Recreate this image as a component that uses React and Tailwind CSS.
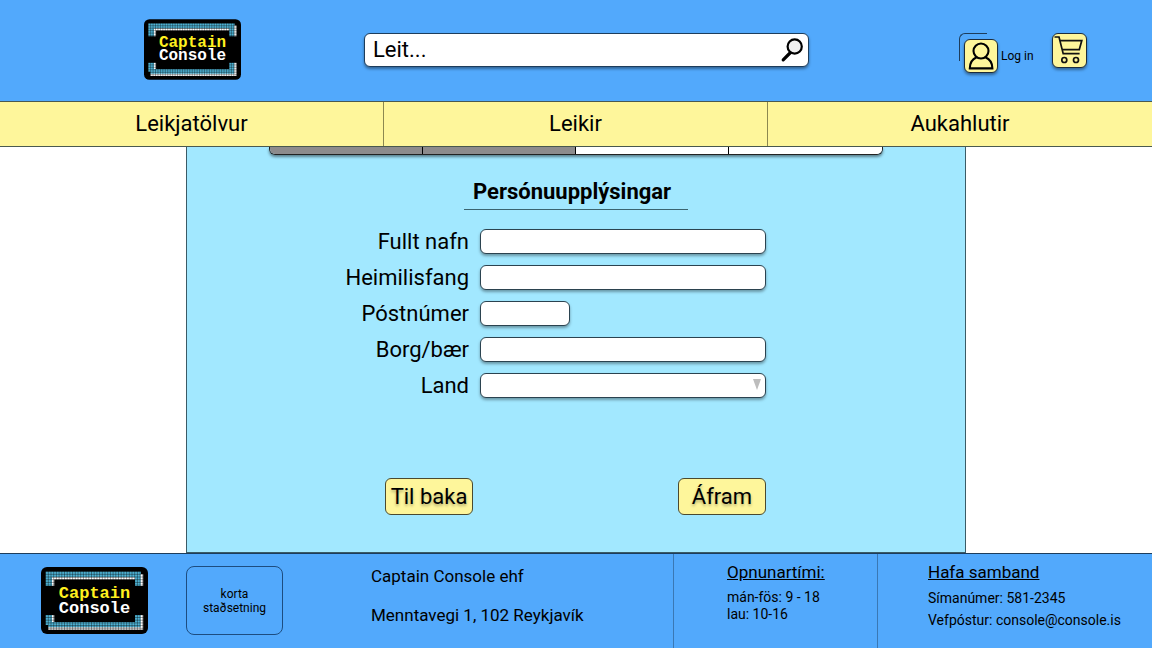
import React from "react";

const gridLines =
  Array.from({ length: 37 }, (_, i) => `M${(4.6 + i * 2.7).toFixed(1)} 4V64`).join("") +
  Array.from({ length: 23 }, (_, i) => `M4 ${(4.6 + i * 2.7).toFixed(1)}H103`).join("");

function LogoFrame() {
  return (
    <svg viewBox="0 0 107 67" className="absolute inset-0 h-full w-full" aria-hidden="true">
      <rect width="107" height="67" rx="6" fill="#000" />
      <path
        fill="#4fb4d6"
        d="M4.6 4.6H100V19H94V10.2H11V19H4.6ZM4.6 48H11V55H94V48H100V60.5H7V58H4.6Z"
      />
      <path
        fill="#fff"
        d="M11 10.2H94V12.5H13.3V19H11ZM99.6 7H102.2V19H99.6ZM11 48H13.3V55H11ZM99.6 48H102.2V62.8H7V60.2H99.6Z"
      />
      <path d={gridLines} stroke="#000" strokeWidth="0.7" strokeOpacity="0.55" />
    </svg>
  );
}

function Logo({ large }) {
  return (
    <a
      href="#"
      className={
        "relative flex shrink-0 flex-col items-center justify-center font-['Liberation_Mono',monospace] font-bold " +
        (large ? "h-[67px] w-[107px] text-[17px] leading-[15px]" : "h-[61px] w-[97px] text-[16px] leading-[13px]")
      }
    >
      <LogoFrame />
      <span className="relative text-[#fff01f]">Captain</span>
      <span className="relative text-white">Console</span>
    </a>
  );
}

function SearchIcon() {
  return (
    <svg width="26" height="26" viewBox="0 0 26 26" fill="none" aria-hidden="true">
      <path d="M10.5 15.5L3.2 22.8" stroke="#000" strokeWidth="3.2" strokeLinecap="round" />
      <circle cx="14.7" cy="9.5" r="7.1" fill="#f0f0f0" stroke="#000" strokeWidth="2.2" />
    </svg>
  );
}

function PersonIcon() {
  return (
    <svg width="32" height="32" viewBox="1 1 32 32" fill="none" stroke="#000" strokeWidth="2.1" aria-hidden="true">
      <circle cx="17" cy="12" r="7.5" />
      <path d="M12.6 18.2C8.4 20 5.8 24 5.8 29.4H28.4C28.4 24 25.6 20 21.4 18.2" />
    </svg>
  );
}

function CartIcon() {
  return (
    <svg width="33" height="33" viewBox="1 1 33 33" fill="none" stroke="#111" strokeWidth="1.7" aria-hidden="true">
      <path d="M2.5 4H7L11.2 20.6H27.6" />
      <path d="M7.9 7.6H29.8L27.3 16.6H10.2" />
      <circle cx="12.3" cy="27" r="2.5" />
      <circle cx="24" cy="27" r="2.5" />
    </svg>
  );
}

const tile =
  "flex items-center justify-center rounded-md border border-[#1c2c3c] bg-[#fef69b] shadow-[0_2px_3px_rgba(0,0,0,0.4)]";

function Header() {
  return (
    <header className="grid grid-cols-[364fr_445fr_343fr] bg-[#52a9fc] pt-[19px] pb-[21px]">
      <div className="pl-36">
        <Logo />
      </div>
      <form
        role="search"
        className="mt-3.5 flex h-[34px] items-center rounded-md border border-[#1d3d5c] bg-white pr-0.5 pl-2 shadow-[0_2px_3px_rgba(0,0,0,0.4)]"
      >
        <input
          type="search"
          aria-label="Leit"
          placeholder="Leit..."
          className="min-w-0 flex-1 bg-transparent text-[22px] leading-[30px] outline-none placeholder:text-black"
        />
        <button type="button" aria-label="Leita">
          <SearchIcon />
        </button>
      </form>
      <div className="mt-3.5 flex items-start pl-[150px]">
        <a href="#" className="relative flex items-center pt-1.5 pl-[5px]">
          <span className="absolute top-0 left-0 h-7 w-7 rounded-tl-md border-t border-l border-[#1d3d5c]" />
          <span className={tile + " h-[34px] w-[34px]"}>
            <PersonIcon />
          </span>
          <span className="pl-[3px] text-[12px] leading-4 whitespace-nowrap">Log in</span>
        </a>
        <a href="#" aria-label="Karfa" className={tile + " ml-[18px] h-[35px] w-[35px] shrink-0"}>
          <CartIcon />
        </a>
      </div>
    </header>
  );
}

function Nav() {
  return (
    <nav className="grid grid-cols-3 divide-x divide-[#8c8850] border-y border-[#4a5a50] bg-[#fef69b] text-center text-[22px] leading-[44px]">
      <a href="#">Leikjatölvur</a>
      <a href="#">Leikir</a>
      <a href="#">Aukahlutir</a>
    </nav>
  );
}

const field =
  "h-[25px] rounded-md border border-[#2b4350] bg-white px-2 text-[16px] shadow-[0_2px_3px_rgba(0,0,0,0.35)] outline-none";
const button =
  "h-[37px] w-[88px] rounded-md border border-[#4a4a30] bg-[#fef69b] text-[22px] leading-7 whitespace-nowrap [text-shadow:0_2px_3px_rgba(0,0,0,0.3)]";

function Field({ id, label, children }) {
  return (
    <>
      <label htmlFor={id} className="text-right text-[22px] leading-[26px]">
        {label}
      </label>
      <div className="flex items-start">{children}</div>
    </>
  );
}

function Checkout() {
  return (
    <main className="mx-auto flex w-full max-w-[780px] flex-1 flex-col border-x border-b border-[#3b5b66] bg-[#a2e8ff]">
      <ol
        aria-label="Skref"
        className="mx-auto grid h-2 w-[614px] grid-cols-4 divide-x divide-black overflow-hidden rounded-b-md border-x border-b border-[#222] shadow-[0_2px_3px_rgba(0,0,0,0.45)]"
      >
        <li className="bg-[#8d8b8c]" />
        <li className="bg-[#8d8b8c]" />
        <li className="bg-white" />
        <li className="bg-white" />
      </ol>
      <h1 className="mx-auto mt-[22px] w-[224px] border-b border-[#3b6470] pb-0.5 pl-[9px] text-[22px] leading-[30px] font-bold">
        Persónuupplýsingar
      </h1>
      <form className="flex flex-1 flex-col">
        <div className="mt-[19px] grid grid-cols-[282px_286px] gap-x-[11px] gap-y-2.5">
          <Field id="name" label="Fullt nafn">
            <input id="name" type="text" className={field + " w-full"} />
          </Field>
          <Field id="address" label="Heimilisfang">
            <input id="address" type="text" className={field + " w-full"} />
          </Field>
          <Field id="zip" label="Póstnúmer">
            <input id="zip" type="text" className={field + " w-[90px]"} />
          </Field>
          <Field id="city" label="Borg/bær">
            <input id="city" type="text" className={field + " w-full"} />
          </Field>
          <Field id="country" label="Land">
            <div className="relative w-full">
              <select id="country" className={field + " block w-full appearance-none"}>
                <option></option>
              </select>
              <svg
                width="8"
                height="11"
                viewBox="0 0 8 11"
                className="pointer-events-none absolute top-1.5 right-[5px]"
                aria-hidden="true"
              >
                <path d="M0 0H8L4 11Z" fill="#bdbdbd" />
              </svg>
            </div>
          </Field>
        </div>
        <div className="mt-auto flex justify-between pr-[199px] pb-[37px] pl-[198px]">
          <button type="button" className={button}>Til baka</button>
          <button type="button" className={button}>Áfram</button>
        </div>
      </form>
    </main>
  );
}

function Footer() {
  return (
    <footer className="grid grid-cols-[673fr_204fr_275fr] border-t border-[#1d3d5c] bg-[#52a9fc]">
      <div className="flex items-center pt-3 pb-[13px] pl-[41px]">
        <Logo large />
        <div className="ml-[38px] flex h-[69px] w-[97px] shrink-0 items-center justify-center rounded-lg border border-[#1d4d80] text-center text-[12px] leading-[14px]">
          korta
          <br />
          staðsetning
        </div>
        <address className="ml-[88px] self-start text-[17px] leading-5 not-italic">
          <p>Captain Console ehf</p>
          <p className="mt-[19px]">Menntavegi 1, 102 Reykjavík</p>
        </address>
      </div>
      <section className="border-l border-[#3a78b4] pt-[7px] pl-[53px]">
        <h2 className="text-[17px] leading-[22px] underline">Opnunartími:</h2>
        <p className="mt-1.5 text-[14px] leading-[17px]">
          mán-fös: 9 - 18
          <br />
          lau: 10-16
        </p>
      </section>
      <section className="border-l border-[#3a78b4] pt-[7px] pl-[50px]">
        <h2 className="text-[17px] leading-[22px] underline">Hafa samband</h2>
        <p className="mt-1 text-[14px] leading-[22px] whitespace-nowrap">
          Símanúmer: 581-2345
          <br />
          Vefpóstur: console@console.is
        </p>
      </section>
    </footer>
  );
}

export default function App() {
  return (
    <div className="flex min-h-screen flex-col bg-white font-[Roboto,'Liberation_Sans',sans-serif] text-black">
      <Header />
      <Nav />
      <Checkout />
      <Footer />
    </div>
  );
}
